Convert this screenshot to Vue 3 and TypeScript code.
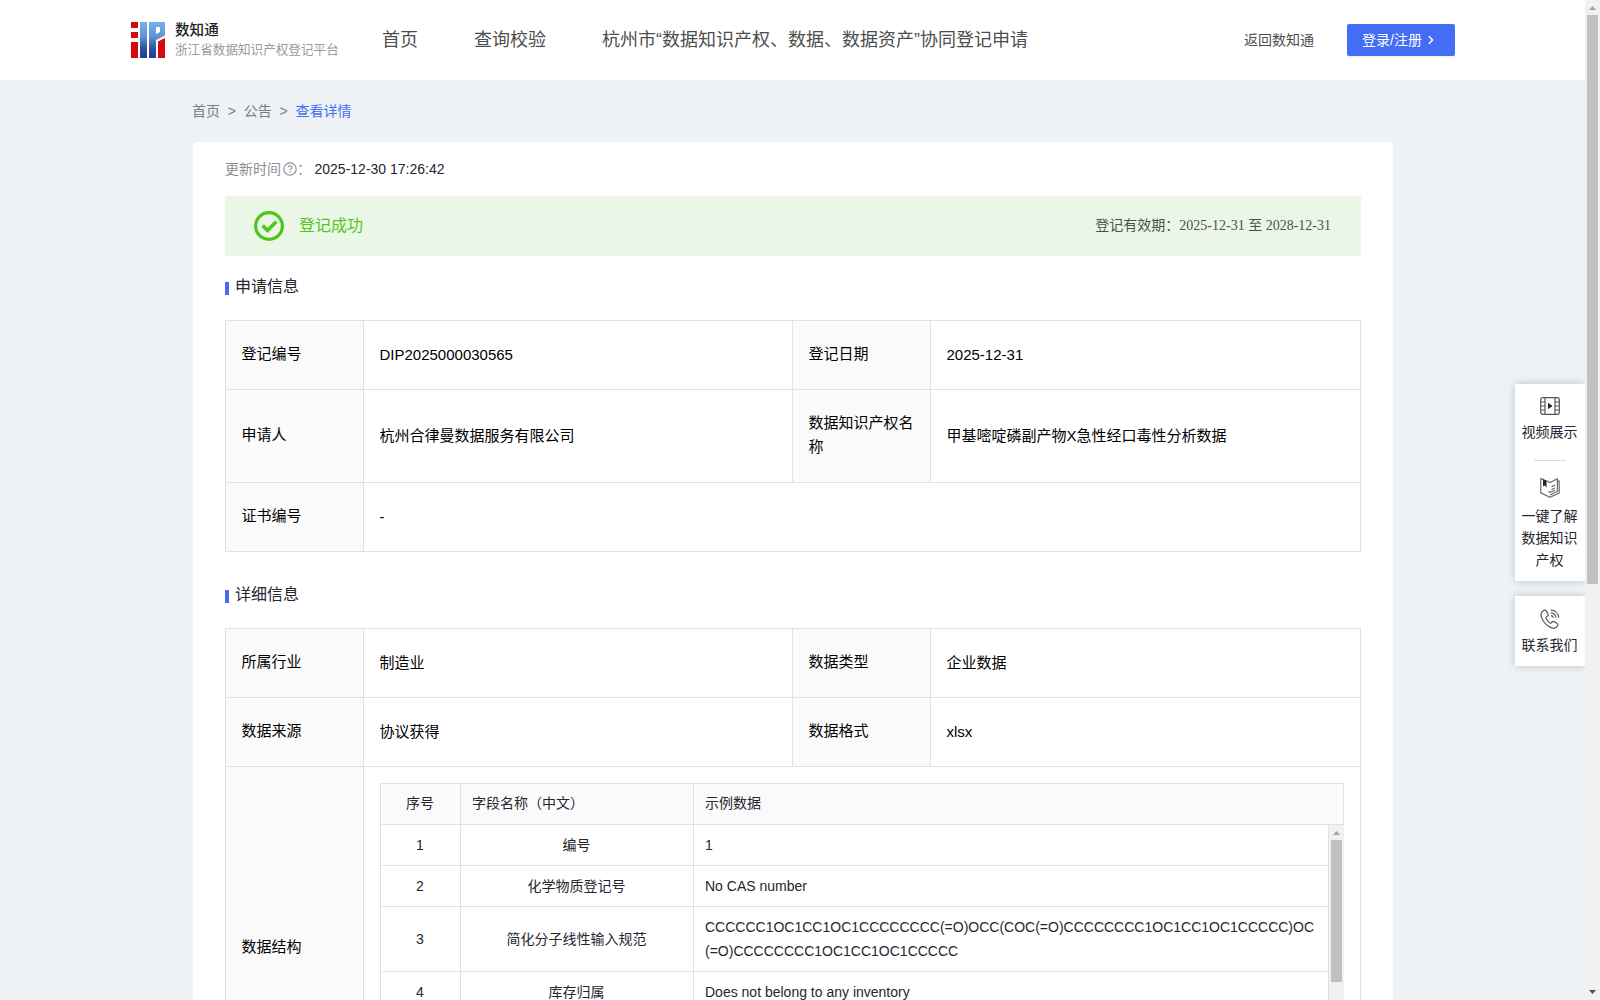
<script setup lang="ts">
interface Cell {
  text: string
  kind: 'label' | 'value' | 'wide'
}

interface FieldRow {
  no: number
  name: string
  sample: string
}

const navItems: string[] = ['首页', '查询校验', '杭州市“数据知识产权、数据、数据资产”协同登记申请']

const applyRows: Cell[][] = [
  [
    { text: '登记编号', kind: 'label' },
    { text: 'DIP2025000030565', kind: 'value' },
    { text: '登记日期', kind: 'label' },
    { text: '2025-12-31', kind: 'value' },
  ],
  [
    { text: '申请人', kind: 'label' },
    { text: '杭州合律曼数据服务有限公司', kind: 'value' },
    { text: '数据知识产权名称', kind: 'label' },
    { text: '甲基嘧啶磷副产物X急性经口毒性分析数据', kind: 'value' },
  ],
  [
    { text: '证书编号', kind: 'label' },
    { text: '-', kind: 'wide' },
  ],
]

const detailRows: Cell[][] = [
  [
    { text: '所属行业', kind: 'label' },
    { text: '制造业', kind: 'value' },
    { text: '数据类型', kind: 'label' },
    { text: '企业数据', kind: 'value' },
  ],
  [
    { text: '数据来源', kind: 'label' },
    { text: '协议获得', kind: 'value' },
    { text: '数据格式', kind: 'label' },
    { text: 'xlsx', kind: 'value' },
  ],
]

const fields: FieldRow[] = [
  { no: 1, name: '编号', sample: '1' },
  { no: 2, name: '化学物质登记号', sample: 'No CAS number' },
  {
    no: 3,
    name: '简化分子线性输入规范',
    sample: 'CCCCCC1OC1CC1OC1CCCCCCCC(=O)OCC(COC(=O)CCCCCCCC1OC1CC1OC1CCCCC)OC(=O)CCCCCCCC1OC1CC1OC1CCCCC',
  },
  { no: 4, name: '库存归属', sample: 'Does not belong to any inventory' },
]
</script>

<template>
  <div class="screen">
    <div class="page">
      <header class="header">
        <div class="brand">
          <svg class="logo" width="34" height="36" viewBox="0 0 34 36">
            <defs>
              <linearGradient id="blue" x1="0" y1="0" x2="0" y2="36" gradientUnits="userSpaceOnUse">
                <stop offset="0" stop-color="#78b0e8" />
                <stop offset="0.4" stop-color="#6193d3" />
                <stop offset="0.75" stop-color="#2f4f9c" />
                <stop offset="1" stop-color="#263c8c" />
              </linearGradient>
            </defs>
            <g fill="#d40a0f">
              <rect x="0" y="0" width="7" height="6" />
              <rect x="0" y="10" width="7" height="6" />
              <rect x="0" y="20" width="7" height="16" />
              <path d="M27 19.500 34 16v20h-7z" />
            </g>
            <g fill="url(#blue)">
              <path d="M9 0h7v36H9z" />
              <path d="M18 0h16v13.500L25 18v18h-7zM25 5v7l4-2V5z" fill-rule="evenodd" />
            </g>
          </svg>
          <div class="brand-text">
            <strong>数知通</strong>
            <span>浙江省数据知识产权登记平台</span>
          </div>
        </div>
        <nav class="nav">
          <a v-for="item in navItems" :key="item">{{ item }}</a>
        </nav>
        <a class="back">返回数知通</a>
        <button class="login">
          <span>登录/注册</span>
          <svg width="8" height="12" viewBox="0 0 8 12"><path d="M1.8 2.2 5.6 6 1.8 9.8" fill="none" stroke="#fff" stroke-width="1.5" /></svg>
        </button>
      </header>

      <div class="crumbs">
        <span>首页</span><i>&gt;</i><span>公告</span><i>&gt;</i><span class="current">查看详情</span>
      </div>

      <main class="card">
        <div class="updated">
          <span class="muted">更新时间</span>
          <svg class="help" width="14" height="14" viewBox="0 0 14 14" fill="none" stroke="#8d8f96">
            <circle cx="7" cy="7" r="6.2" stroke-width="1.2" />
            <path d="M5.1 5.6c0-2.4 3.8-2.4 3.8-.1 0 1.3-1.9 1.4-1.9 2.8" stroke-width="1.1" />
            <path d="M7 9.4v1.3" stroke-width="1.3" />
          </svg>
          <span class="muted colon">：</span>
          <span class="time">2025-12-30 17:26:42</span>
        </div>

        <div class="banner">
          <svg width="30" height="30" viewBox="0 0 30 30" fill="none" stroke="#4fc51b">
            <circle cx="15" cy="15" r="13.4" stroke-width="3.2" />
            <path d="m8.6 14.6 5 4.8 8.6-8.6" stroke-width="3.6" />
          </svg>
          <span class="state">登记成功</span>
          <span class="period">登记有效期：<b>2025-12-31 至 2028-12-31</b></span>
        </div>

        <h3 class="section">申请信息</h3>
        <div class="table">
          <div v-for="(row, r) in applyRows" :key="r" class="row">
            <div v-for="(cell, c) in row" :key="c" class="cell" :class="cell.kind">{{ cell.text }}</div>
          </div>
        </div>

        <h3 class="section second">详细信息</h3>
        <div class="table">
          <div v-for="(row, r) in detailRows" :key="r" class="row">
            <div v-for="(cell, c) in row" :key="c" class="cell" :class="cell.kind">{{ cell.text }}</div>
          </div>
          <div class="row structure">
            <div class="cell label">数据结构</div>
            <div class="cell wide nested">
              <div class="fields">
                <div class="field head">
                  <div class="no">序号</div>
                  <div class="name">字段名称（中文）</div>
                  <div class="sample">示例数据</div>
                </div>
                <div class="body">
                  <div class="lines">
                    <div v-for="f in fields" :key="f.no" class="field">
                      <div class="no">{{ f.no }}</div>
                      <div class="name">{{ f.name }}</div>
                      <div class="sample">{{ f.sample }}</div>
                    </div>
                  </div>
                  <div class="bar inner">
                    <span class="up"></span>
                    <span class="thumb"></span>
                  </div>
                </div>
              </div>
            </div>
          </div>
        </div>
      </main>

      <aside class="float">
        <div class="panel">
          <div class="entry">
            <svg width="20" height="18" viewBox="0 0 20 18" fill="none" stroke="#55565c" stroke-width="1.2">
              <rect x=".7" y=".7" width="18.6" height="16.6" rx="2" />
              <path d="M5 .7v16.6M15 .7v16.6M.7 5H5M.7 9H5M.7 13H5M15 5h4.3M15 9h4.3M15 13h4.3" />
              <path d="M8 5.8 12.6 9 8 12.2z" fill="#25262c" stroke="none" />
            </svg>
            <span>视频展示</span>
          </div>
          <div class="rule"></div>
          <div class="entry book">
            <svg width="20" height="20" viewBox="0 0 20 20" fill="none" stroke="#6a6b70" stroke-width="1.2">
              <path d="M3.400 1.200.8.800v14L10 19.300l9.200-4.500V3.200l-1.800-.6" />
              <path d="M6.600 2.800 10 4.600 17.400.8v12.400L10 17" />
              <path d="M11.500 8.600 15 7M11.500 11.500 15 10M8.500 13.500l1.500.8L15 12.300" />
              <path d="M3 1 6.600 2.600V9.400L4.900 7.600 3 8.200z" fill="#25262c" stroke="none" />
            </svg>
            <span>一键了解数据知识产权</span>
          </div>
        </div>
        <div class="panel">
          <div class="entry phone">
            <svg width="20" height="20" viewBox="0 0 20 20" fill="none" stroke="#55565c" stroke-width="1.2">
              <path d="M3.4 1.600C1 3.200.4 5.600 1.600 8.600c1.800 4.600 5 8 9.400 10 2.800 1.200 5.400.4 6.600-1.800.5-1 .2-1.900-.7-2.500l-2.600-1.500c-.9-.5-1.700-.4-2.300.4-.9 1.300-1.700 1.200-2.900.2-1.600-1.300-2.500-2.600-3-4-.3-.9 0-1.500.9-1.900 1.100-.5 1.400-1.300.9-2.400L6.600 2.500c-.7-1.400-1.900-1.800-3.200-.9z" />
              <path d="M10.800 1.200c4.500.1 7.600 3.100 7.900 7.600M10.800 3.900c2.900.1 4.900 2 5.100 4.900M11 6.600c1.300.1 2.100.9 2.200 2.200" />
            </svg>
            <span>联系我们</span>
          </div>
        </div>
      </aside>
    </div>

    <div class="bar outer">
      <span class="up"></span>
      <span class="thumb"></span>
      <span class="down"></span>
    </div>
  </div>
</template>

<style>
html,
body {
  margin: 0;
  overflow: hidden;
}
</style>

<style scoped>
* {
  box-sizing: border-box;
}
.screen {
  display: flex;
  width: 1600px;
  height: 1000px;
  overflow: hidden;
  background: #eef2f5;
  color: #25262f;
  font: 14px/24px "Liberation Sans", "Noto Sans CJK SC", sans-serif;
}
.page {
  position: relative;
  width: 1585px;
  height: 1000px;
  overflow: hidden;
}
.header {
  display: flex;
  align-items: center;
  height: 80px;
  padding: 0 130px 0 131px;
  background: #fff;
  color: #4e4e4e;
}
.brand {
  display: flex;
  width: 251px;
  padding-top: 1px;
  gap: 10px;
}
.logo {
  flex: none;
  margin-top: 1px;
}
.brand-text {
  display: flex;
  flex-direction: column;
  padding-top: 1px;
  white-space: nowrap;
}
.brand-text strong {
  color: #222;
  font-size: 14.6px;
  font-weight: 500;
  line-height: 17px;
}
.brand-text span {
  color: #9b9b9b;
  font-size: 12.6px;
  line-height: 22px;
}
.nav {
  display: flex;
  gap: 56px;
  font-size: 18px;
  white-space: nowrap;
}
.back {
  margin-left: auto;
  margin-right: 33px;
}
.login {
  display: flex;
  align-items: center;
  width: 108px;
  height: 32px;
  padding: 0 0 1px 15px;
  gap: 5px;
  border: 0;
  border-radius: 2px;
  background: #446df6;
  box-shadow: 0 2px 0 rgba(0, 0, 0, 0.045);
  color: #fff;
  font: inherit;
}
.crumbs {
  display: flex;
  height: 62px;
  padding: 19px 0 0 192px;
  color: #7b7c80;
}
.crumbs i {
  margin: 0 7.8px;
  font-style: normal;
}
.crumbs .current {
  color: #446df6;
}
.card {
  width: 1200px;
  height: 1100px;
  margin-left: 193px;
  padding: 15px 32px 0;
  border-radius: 4px;
  background: #fff;
}
.updated {
  display: flex;
  align-items: center;
  height: 24px;
}
.muted {
  margin-top: -1px;
  color: #8d8f96;
}
.help {
  margin-left: 2px;
}
.colon {
  width: 17px;
}
.time {
  margin-left: 0.5px;
}
.banner {
  display: flex;
  align-items: center;
  height: 60px;
  margin-top: 15px;
  padding: 0 30px 0 29px;
  background: #ebf7e6;
}
.state {
  margin-left: 15px;
  color: #52c41a;
  font-size: 16px;
}
.period {
  margin-left: auto;
  padding-bottom: 2px;
  color: #4e4e4e;
}
.period b {
  font-family: "Liberation Serif", "Noto Sans CJK SC", serif;
  font-weight: 400;
}
.section {
  display: flex;
  align-items: center;
  gap: 6px;
  height: 24px;
  margin: 19px 0 21px;
  font-size: 16px;
  font-weight: 400;
}
.section.second {
  margin-top: 31px;
}
.section::before {
  content: "";
  width: 4px;
  height: 13px;
  margin-top: 2px;
  background: #446df6;
}
.table {
  border-top: 1px solid #e1e1e1;
  border-left: 1px solid #e1e1e1;
  color: #000;
  font-size: 15px;
}
.row {
  display: flex;
  min-height: 69px;
}
.cell {
  display: flex;
  align-items: center;
  padding: 22px 15px 22px 15.5px;
  border-right: 1px solid #e1e1e1;
  border-bottom: 1px solid #e1e1e1;
}
.label {
  width: 138px;
  padding-top: 21px;
  padding-bottom: 23px;
  background: #fafafa;
}
.value {
  width: 429px;
}
.value:last-child {
  width: 430px;
}
.wide {
  width: 997px;
}
.structure {
  height: 362px;
}
.nested {
  align-items: flex-start;
  padding: 16px 16px 0;
}
.fields {
  width: 964px;
  color: #25262f;
  font-size: 14px;
}
.field {
  display: flex;
  border-left: 1px solid #e1e1e1;
}
.field > div {
  display: flex;
  align-items: center;
  padding: 8px 12px 8px 11px;
  border-right: 1px solid #e1e1e1;
  border-bottom: 1px solid #e1e1e1;
}
.field .no {
  width: 80px;
  justify-content: center;
}
.field .name {
  width: 233px;
  justify-content: center;
}
.field .sample {
  flex: 1;
  overflow-wrap: anywhere;
}
.head {
  border-top: 1px solid #e1e1e1;
  background: #fafafa;
}
.field.head > div {
  padding-top: 7px;
  padding-bottom: 9px;
}
.field.head .name {
  justify-content: flex-start;
}
.body {
  display: flex;
  height: 287px;
  overflow: hidden;
}
.lines {
  width: 949px;
}
.bar {
  display: flex;
  flex-direction: column;
  align-items: center;
  width: 15px;
  background: #f1f1f1;
}
.up,
.down {
  width: 7px;
  height: 4px;
  background: #a3a3a3;
  clip-path: polygon(50% 0, 100% 100%, 0 100%);
}
.up {
  margin: 6px 0 5px;
}
.down {
  margin: auto 0 6px;
  background: #505050;
  clip-path: polygon(0 0, 100% 0, 50% 100%);
}
.thumb {
  width: 11px;
  height: 142px;
  background: #c1c1c1;
}
.outer .thumb {
  height: 569px;
}
.float {
  position: absolute;
  top: 384px;
  right: 0;
  display: flex;
  flex-direction: column;
  gap: 15px;
  width: 70px;
}
.panel {
  padding: 13px 7px 10px;
  background: #fff;
  box-shadow: 0 0 8px rgba(0, 0, 0, 0.2);
}
.entry {
  display: flex;
  flex-direction: column;
  align-items: center;
  gap: 6px;
  line-height: 22px;
  text-align: center;
}
.entry span {
  width: 56px;
  margin-left: -1px;
}
.rule {
  width: 32px;
  height: 1px;
  margin: 17px auto;
  background: #dcdcdc;
}
.book {
  gap: 7px;
}
.entry.phone {
  gap: 5px;
}
.panel:first-child {
  height: 197px;
}
.panel:last-child {
  height: 70px;
}
</style>
